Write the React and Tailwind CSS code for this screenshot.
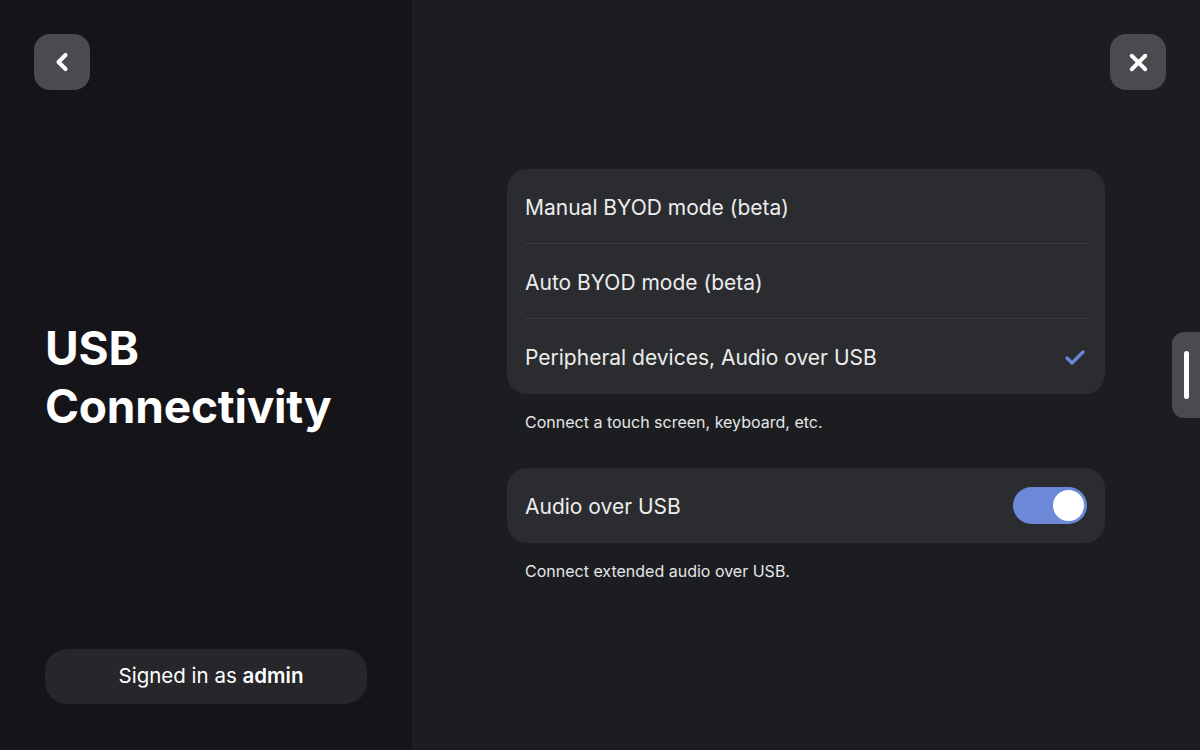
import { ChevronLeft, X, Check } from 'lucide-react';

const options = [
  { label: 'Manual BYOD mode (beta)', selected: false },
  { label: 'Auto BYOD mode (beta)', selected: false },
  { label: 'Peripheral devices, Audio over USB', selected: true },
];

export default function App() {
  return (
    <div
      className="flex h-[750px] w-[1200px] overflow-hidden text-white"
      style={{ fontFamily: 'Inter, "Noto Sans", sans-serif' }}
    >
      {/* Panel izquierdo */}
      <div className="flex w-[412px] flex-col bg-[#141419] px-[34px] pt-[34px] pb-[46px]">
        <button className="flex h-[56px] w-[56px] items-center justify-center rounded-[16px] bg-[#4a4a4f]">
          <ChevronLeft className="h-[28px] w-[28px]" strokeWidth={3.5} />
        </button>
        <div className="flex flex-1 items-center pl-[11px] pt-[14px]">
          <h1 className="text-[46px] font-bold leading-[58px] tracking-[-0.2px]">
            USB
            <br />
            Connectivity
          </h1>
        </div>
        <div className="ml-[11px] flex h-[55px] w-[322px] items-center justify-center rounded-[22px] bg-[#26262b] pl-[10px] text-[20.5px]">
          <span>
            Signed in as <span className="font-semibold">admin</span>
          </span>
        </div>
      </div>

      {/* Panel derecho */}
      <div className="relative flex-1 bg-[#1c1d21]">
        <button className="absolute right-[34px] top-[34px] flex h-[56px] w-[56px] items-center justify-center rounded-[16px] bg-[#4a4a4f]">
          <X className="h-[27px] w-[27px]" strokeWidth={3.5} />
        </button>

        <div className="mx-auto mt-[169px] w-[598px]">
          <div className="rounded-[20px] bg-[#2b2c30] px-[18px]">
            {options.map((opt, i) => (
              <div
                key={opt.label}
                className={`flex h-[75px] items-center justify-between pt-[3px] text-[21px] text-[#ececec] ${
                  i < options.length - 1 ? 'border-b border-[#3a3b40]' : ''
                }`}
              >
                <span>{opt.label}</span>
                {opt.selected && <Check className="h-[24px] w-[24px] text-[#6b86d6]" strokeWidth={3.5} />}
              </div>
            ))}
          </div>
          <p className="mt-[16px] pl-[18px] text-[16px] text-[#e6e6e6]">Connect a touch screen, keyboard, etc.</p>

          <div className="mt-[34px] flex h-[75px] items-center justify-between rounded-[20px] bg-[#2b2c30] px-[18px]">
            <span className="pt-[2px] text-[21px] text-[#ececec]">Audio over USB</span>
            <div className="flex h-[37px] w-[74px] items-center justify-end rounded-full bg-[#6b89d6] pr-[3px]">
              <div className="h-[31px] w-[31px] rounded-full bg-white" />
            </div>
          </div>
          <p className="mt-[16px] pl-[18px] text-[16px] text-[#e6e6e6]">Connect extended audio over USB.</p>
        </div>

        {/* Asa de desplazamiento */}
        <div className="absolute right-0 top-[332px] flex h-[86px] w-[28px] items-center justify-center rounded-l-[12px] bg-[#4a4a4f]">
          <div className="h-[48px] w-[5px] rounded-full bg-white" />
        </div>
      </div>
    </div>
  );
}
